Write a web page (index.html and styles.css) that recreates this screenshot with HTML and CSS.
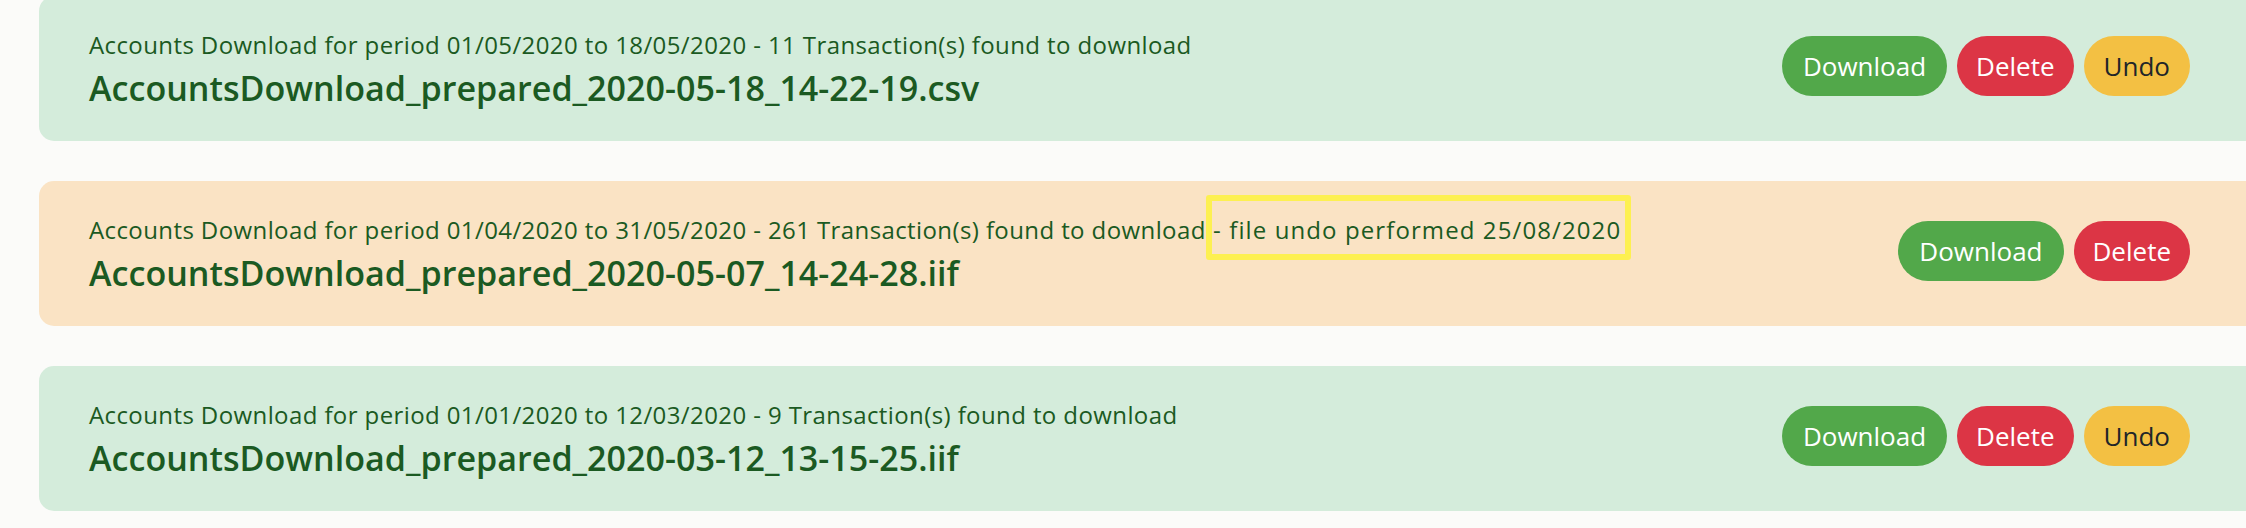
FILE: index.html
```html
<!DOCTYPE html>
<html lang="en">
<head>
    <meta charset="UTF-8">
    <title>Downloads</title>
    <link rel="stylesheet" href="styles.css">
</head>
<body>
<div class="downloads">
    <div class="item success">
        <div class="item-info">
            <div class="item-desc">Accounts Download for period 01/05/2020 to 18/05/2020 - 11 Transaction(s) found to download</div>
            <div class="item-file">AccountsDownload_prepared_2020-05-18_14-22-19.csv</div>
        </div>
        <div class="item-actions">
            <button class="btn btn-download">Download</button>
            <button class="btn btn-delete">Delete</button>
            <button class="btn btn-undo">Undo</button>
        </div>
    </div>
    <div class="item undone">
        <div class="item-info">
            <div class="item-desc">Accounts Download for period 01/04/2020 to 31/05/2020 - 261 Transaction(s) found to download<span class="mark"> - file undo performed 25/08/2020</span></div>
            <div class="item-file">AccountsDownload_prepared_2020-05-07_14-24-28.iif</div>
        </div>
        <div class="item-actions">
            <button class="btn btn-download">Download</button>
            <button class="btn btn-delete">Delete</button>
        </div>
    </div>
    <div class="item success">
        <div class="item-info">
            <div class="item-desc">Accounts Download for period 01/01/2020 to 12/03/2020 - 9 Transaction(s) found to download</div>
            <div class="item-file">AccountsDownload_prepared_2020-03-12_13-15-25.iif</div>
        </div>
        <div class="item-actions">
            <button class="btn btn-download">Download</button>
            <button class="btn btn-delete">Delete</button>
            <button class="btn btn-undo">Undo</button>
        </div>
    </div>
</div>
</body>
</html>
```

FILE: styles.css
```css
* {
    margin: 0;
    padding: 0;
    box-sizing: border-box;
}
body {
    background: #fbfbf9;
    font-family: "Open Sans", "Noto Sans", sans-serif;
    overflow: hidden;
}
.downloads {
    display: flex;
    flex-direction: column;
    gap: 40px;
    margin: -4px -60px 0 39px;   /* list runs on past the right edge */
}
.item {
    display: flex;
    align-items: center;
    justify-content: space-between;
    min-height: 145px;
    padding: 27px 116px 27px 50px;
    border-radius: 15px;
    color: #1b5a22;
}
.success {
    background: #d4ecdb;
}
.undone {
    background: #fae3c4;
}
.item-info {
    padding-top: 5px;
}
.item-desc {
    font-size: 24px;
    letter-spacing: 0.4px;
    line-height: 34px;
}
.item-file {
    font-size: 34.1px;
    font-weight: 600;
    line-height: 52px;
}
.mark {
    position: relative;
    letter-spacing: 1.1px;
}
.mark::after {
    content: "";
    position: absolute;
    left: 0;
    right: -10px;
    top: -18px;
    bottom: -14px;
    border: 6px solid #fdf051;
    border-radius: 3px;
}
.item-actions {
    display: flex;
    gap: 10px;
    margin-bottom: 5px;
}
.btn {
    height: 60px;
    padding: 0 20px;
    border: none;
    border-radius: 30px;
    font-family: inherit;
    font-size: 26px;
    color: #fff;
    cursor: pointer;
}
.btn-download {
    background: #52a84a;
    padding: 0 21px;
}
.btn-delete {
    background: #dc3545;
    padding: 0 19px;
}
.btn-undo {
    background: #f3c043;
    color: #212529;
}
```
